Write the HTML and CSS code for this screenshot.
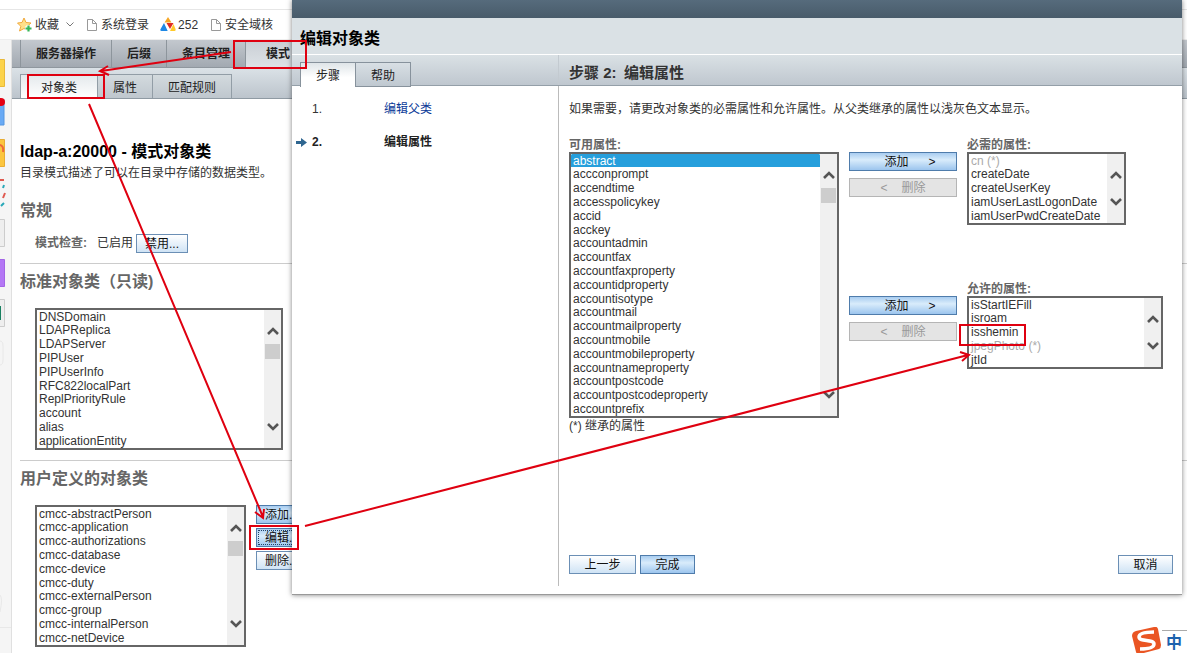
FILE: index.html
```html
<!DOCTYPE html>
<html lang="zh-CN">
<head>
<meta charset="utf-8">
<title>编辑对象类</title>
<link rel="stylesheet" href="styles.css">
</head>
<body>
<svg class="defs" aria-hidden="true">
  <symbol id="up" viewBox="0 0 12 8"><path d="M1 7 6 2l5 5" fill="none" stroke="#555" stroke-width="2.6"/></symbol>
  <symbol id="down" viewBox="0 0 12 8"><path d="M1 1l5 5 5-5" fill="none" stroke="#555" stroke-width="2.6"/></symbol>
  <symbol id="file" viewBox="0 0 12 14"><path d="M1.500 1.500h5l4 4v7h-9zM6.500 1.500v4h4" fill="#fff" stroke="#999"/></symbol>
</svg>

<div class="chrome"></div>
<nav class="bookmarks">
  <a class="fav" href="#"><svg width="16" height="16" viewBox="0 0 16 16"><path d="M7 1l2 4.500 5 .5-3.800 3.300L11.500 14 7 11.500 2.500 14l1.300-4.700L.5 6l4.500-.5z" fill="#ffe08a" stroke="#f0a93c"/><path d="M11.500 8v7M8 11.500h7" stroke="#fff" stroke-width="4"/><path d="M11.500 8.500v6M8.500 11.500h6" stroke="#35b558" stroke-width="2.200"/></svg>收藏<svg class="caret" width="8" height="5" viewBox="0 0 8 5"><path d="M.5.5 4 4 7.500.5" fill="none" stroke="#777"/></svg></a>
  <a class="login" href="#"><svg width="12" height="14"><use href="#file"/></svg>系统登录</a>
  <a class="num" href="#"><svg width="16" height="15" viewBox="0 0 16 15"><path d="M8 0l3.500 5.500H4.500z" fill="#f6a623"/><path d="M4 6l3.700 8H1.500C.3 14 0 13 .6 12z" fill="#1e88e5"/><path d="M6.500 6h7L10 12z" fill="#e02b20"/><path d="M13.500 7l2 5c.4 1 0 2-1 2H10z" fill="#ffc928"/></svg>252</a>
  <a href="#"><svg width="12" height="14"><use href="#file"/></svg>安全域核</a>
</nav>

<div class="workspace">
  <aside class="rail"><svg width="11" height="600" viewBox="0 40 11 600">
    <path d="M-5 59.500h9.500v27H-5z" fill="#fcd34b" stroke="#e9b93a"/>
    <path d="M-5 99.500h9V125H-5z" fill="#69aaf5" stroke="#5596e0"/><circle cx="1" cy="102" r="4" fill="#e60012"/>
    <path d="M-5 139.500h9.500v27H-5z" fill="#fcc63f" stroke="#e8ad35"/><path d="M-1 145q5 0 4 7" fill="none" stroke="#ef6a3a" stroke-width="2"/>
    <path d="M3 188l1-3M1 206l3-3" stroke="#29a8b8" stroke-width="2"/><path d="M0 180h4M3 198l2-5" stroke="#e05a50" stroke-width="2"/>
    <path d="M-5 219.500h9.500v27H-5z" fill="#eee" stroke="#ccc"/>
    <path d="M-5 259.500h9.500v27H-5z" fill="#b477f5" stroke="#a366e6"/>
    <path d="M-5 299.500h9.500v27H-5z" fill="#eee" stroke="#ccc"/><path d="M0 306h1v14H0z" fill="#188060"/>
    <path d="M0 341q3 0 3 5v14q0 5-3 5M0 595q3 3 0 17M0 627.500h11" fill="none" stroke="#e8e8e8"/>
  </svg></aside>
  <main class="page">
    <nav class="tabs">
      <a href="#">服务器操作</a><a href="#">后缀</a><a href="#">条目管理</a><a class="on" href="#">模式</a>
    </nav>
    <nav class="subtabs">
      <a class="on" href="#">对象类</a><a href="#">属性</a><a href="#">匹配规则</a>
    </nav>
    <div class="content">
      <h1>ldap-a:20000 - 模式对象类</h1>
      <p class="intro">目录模式描述了可以在目录中存储的数据类型。</p>
      <section class="general">
        <h2>常规</h2>
        <div class="check"><span class="name">模式检查:</span><span>已启用</span><button class="btn">禁用...</button></div>
      </section>
      <section>
        <h2><label for="std">标准对象类（只读)</label></h2>
        <div class="listbox tall std">
          <select id="std" size="10">
            <option>DNSDomain</option><option>LDAPReplica</option><option>LDAPServer</option><option>PIPUser</option><option>PIPUserInfo</option><option>RFC822localPart</option><option>ReplPriorityRule</option><option>account</option><option>alias</option><option>applicationEntity</option>
          </select>
          <div class="bar"><svg class="arrow"><use href="#up"/></svg><i class="thumb"></i><svg class="arrow last"><use href="#down"/></svg></div>
        </div>
      </section>
      <section>
        <h2><label for="usr">用户定义的对象类</label></h2>
        <div class="with-actions">
          <div class="listbox tall usr">
            <select id="usr" size="10">
              <option>cmcc-abstractPerson</option><option>cmcc-application</option><option>cmcc-authorizations</option><option>cmcc-database</option><option>cmcc-device</option><option>cmcc-duty</option><option>cmcc-externalPerson</option><option>cmcc-group</option><option>cmcc-internalPerson</option><option>cmcc-netDevice</option>
            </select>
            <div class="bar"><svg class="arrow"><use href="#up"/></svg><i class="thumb"></i><svg class="arrow last"><use href="#down"/></svg></div>
          </div>
          <div class="actions"><button class="btn primary">添加...</button><button class="btn primary focus">编辑...</button><button class="btn">删除...</button></div>
        </div>
      </section>
    </div>
  </main>
</div>

<div class="dialog" role="dialog" aria-labelledby="dlg-title">
  <div class="titlebar"></div>
  <h2 class="dlg-title" id="dlg-title">编辑对象类</h2>
  <div class="dlg-bar">
    <nav class="dlg-tabs"><a class="on" href="#">步骤</a><a href="#">帮助</a></nav>
    <h3>步骤 2:&ensp;编辑属性</h3>
  </div>
  <div class="dlg-body">
    <div class="steps">
      <div class="step"><span></span><span>1.</span><a href="#">编辑父类</a></div>
      <div class="step current"><svg width="11" height="9" viewBox="0 0 11 9"><path d="M0 3h5V0l6 4.500L5 9V6H0z" fill="#2f6690"/></svg><span>2.</span><span>编辑属性</span></div>
    </div>
    <div class="editor">
      <p>如果需要，请更改对象类的必需属性和允许属性。从父类继承的属性以浅灰色文本显示。</p>
      <div class="picker">
        <div class="available">
          <label for="avail">可用属性:</label>
          <div class="listbox avail">
            <select id="avail" size="19">
              <option selected>abstract</option><option>accconprompt</option><option>accendtime</option><option>accesspolicykey</option><option>accid</option><option>acckey</option><option>accountadmin</option><option>accountfax</option><option>accountfaxproperty</option><option>accountidproperty</option><option>accountisotype</option><option>accountmail</option><option>accountmailproperty</option><option>accountmobile</option><option>accountmobileproperty</option><option>accountnameproperty</option><option>accountpostcode</option><option>accountpostcodeproperty</option><option>accountprefix</option>
            </select>
            <div class="bar"><svg class="arrow"><use href="#up"/></svg><i class="thumb"></i><svg class="arrow last"><use href="#down"/></svg></div>
          </div>
          <div class="note">(*) 继承的属性</div>
        </div>
        <div class="targets">
          <div class="target">
            <div class="moves"><button class="btn add"><span>添加</span><span>&gt;</span></button><button class="btn remove" disabled><span>&lt;</span><span>删除</span></button></div>
            <div>
              <label for="req">必需的属性:</label>
              <div class="listbox short req">
                <select id="req" size="5"><option disabled>cn (*)</option><option>createDate</option><option>createUserKey</option><option>iamUserLastLogonDate</option><option>iamUserPwdCreateDate</option></select>
                <div class="bar"><svg class="arrow"><use href="#up"/></svg><svg class="arrow last"><use href="#down"/></svg></div>
              </div>
            </div>
          </div>
          <div class="target">
            <div class="moves"><button class="btn add"><span>添加</span><span>&gt;</span></button><button class="btn remove" disabled><span>&lt;</span><span>删除</span></button></div>
            <div>
              <label for="opt">允许的属性:</label>
              <div class="listbox short opt">
                <select id="opt" size="5"><option>isStartIEFill</option><option>isroam</option><option>isshemin</option><option disabled>jpegPhoto (*)</option><option>jtId</option></select>
                <div class="bar"><svg class="arrow"><use href="#up"/></svg><svg class="arrow last"><use href="#down"/></svg></div>
              </div>
            </div>
          </div>
        </div>
      </div>
      <div class="footer"><button class="btn back">上一步</button><button class="btn primary done">完成</button><button class="btn cancel">取消</button></div>
    </div>
  </div>
</div>

<svg class="marks" width="1187" height="653" viewBox="0 0 1187 653" fill="none" stroke="#df0010" stroke-width="2" aria-hidden="true">
  <path d="M234 41h72v27h-72zM28 75h76v23H28zM250 526h48v23h-48zM960 325h65v20h-65z"/>
  <path d="M231 52 101 71M108 66l-8 5 9 4" />
  <path d="M89 104 263 517M255 512l8 6 1-9"/>
  <path d="M305 526 968 355M960 352l9 3-7 6"/>
</svg>

<div class="ime">
  <svg width="30" height="28" viewBox="0 0 30 28"><path d="M4 4 22 0q3-1 4 2l3 16q0 3-2 4L8 27q-3 1-4-2L0 9q0-4 4-5z" fill="#ea5523"/><path d="M22 5Q7 5 7 10c0 5 15 2 15 7 0 4-8 5-14 5" fill="none" stroke="#fff" stroke-width="3.500"/></svg>
  <span>中</span>
</div>
</body>
</html>
```

FILE: styles.css
```css
* { box-sizing: border-box; }

body {
  margin: 0;
  min-height: 100vh;
  display: flex;
  flex-direction: column;
  overflow: hidden;
  position: relative;
  background: #fff;
  color: #333;
  font: 12px/20px "Liberation Sans", "Noto Sans CJK SC", sans-serif;
}

h1, h2, h3, p { margin: 0; }
a { color: inherit; text-decoration: none; }
svg { flex: none; }
.defs { position: absolute; width: 0; height: 0; }

.chrome { height: 10px; border-bottom: 1px solid #e6e6e6; }

.bookmarks {
  display: flex;
  align-items: center;
  height: 30px;
  padding-left: 17px;
  border-bottom: 1px solid #eee;
}
.bookmarks a { display: flex; align-items: center; gap: 3px; margin-right: 11px; }
.bookmarks .fav { gap: 2px; margin-right: 12px; }
.bookmarks .num { gap: 2px; margin-right: 12px; }
.caret { margin-left: 5px; }

.workspace { flex: 1; display: flex; }
.rail { width: 12px; flex: none; background: #f5f5f5; border-right: 1px solid #e0e0e0; }
.page { flex: 1; min-width: 0; }

.tabs {
  display: flex;
  height: 28px;
  padding-left: 8px;
  border-bottom: 1px solid #8f979e;
  background: linear-gradient(#c3c8ce, #a2a9b1);
  color: #222;
  font-weight: bold;
  line-height: 29px;
}
.tabs a { height: 27px; padding: 0 15px; border-left: 1px solid #8d959c; }
.tabs .on { padding: 0 20px; background: linear-gradient(#c9ced4, #dde2e6); }

.subtabs {
  display: flex;
  height: 31px;
  padding: 6px 0 0 8px;
  border-bottom: 1px solid #8f9aa3;
  background: linear-gradient(#dbe2e7, #bcc4cc);
  line-height: 26px;
  color: #222;
}
.subtabs a {
  height: 24px;
  padding: 0 15px;
  border: 1px solid #929da6;
  border-width: 1px 1px 0 0;
  background: linear-gradient(#d3dade, #bfc7ce);
}
.subtabs .on { padding: 0 20px; border-left-width: 1px; background: linear-gradient(#e4e9ec, #fff); }

.content { padding: 43px 0 0 8px; }
h1 { font-size: 16px; line-height: 20px; color: #000; }
.intro { margin-top: 1px; }
.content h2 { font-size: 16px; line-height: 26px; color: #666; }
.content section { padding-top: 5px; }
.content section + section { border-top: 1px solid #ccc; margin-top: 10px; }
.content .general { padding-top: 15px; }
.check { display: flex; align-items: center; margin-top: 10px; padding-left: 15px; line-height: 19px; }
.check .name { width: 62px; font-weight: bold; color: #666; }
.check .btn { width: 52px; margin-left: 3px; }

.btn {
  height: 19px;
  padding: 2px 0 0;
  border: 1px solid #6b8fb5;
  background: linear-gradient(#fff, #cfe3f5);
  color: #111;
  font: inherit;
  line-height: 15px;
}
.btn.primary, .btn.add { border-color: #4f7cab; background: linear-gradient(#a9cdf0, #d9ecfb 40%, #9cc5ee); }
.btn.remove { border-color: #b5b5b5; background: #e4e4e4; color: #999; }

.listbox { display: flex; border: 2px solid #666; background: #fff; }
.listbox select {
  flex: 1;
  min-width: 0;
  height: 100%;
  border: 0;
  padding: 0;
  outline: 0;
  overflow: hidden;
  background: #fff;
  font: 12px/14px "Liberation Sans", "Noto Sans CJK SC", sans-serif;
  color: #333;
}
option { min-height: 0; padding: 0 2px; line-height: 14px; height: 14px; overflow: visible; }
option:nth-child(5n+1) { line-height: 12px; height: 13px; }
option:disabled { color: #aaa; }
option:checked { background: #269fdc linear-gradient(#269fdc, #269fdc); color: #fff; -webkit-text-fill-color: #fff; }

.bar { width: 17px; background: #f0f0f0; display: flex; flex-direction: column; align-items: center; padding: 17px 0; }
.arrow { width: 12px; height: 8px; }
.arrow.last { margin-top: auto; }
.thumb { width: 15px; height: 15px; margin-top: 9px; background: #cdcdcd; }

.listbox.tall { height: 142px; margin: 13px 0 0 15px; }
.listbox.avail { height: 266px; }
.listbox.short { height: 73px; }
.std { width: 248px; }
.usr { width: 211px; }
.avail { width: 270px; }
.req { width: 159px; }
.opt { width: 196px; }

.with-actions { display: flex; gap: 10px; }
.actions { display: flex; flex-direction: column; gap: 4px; padding-top: 13px; }
.actions .btn { width: 52px; }
.actions .focus { outline: 1px dotted #246; outline-offset: -3px; }

.dialog {
  position: absolute;
  top: 0;
  left: 292px;
  right: 5px;
  height: 595px;
  display: flex;
  flex-direction: column;
  background: #fff;
  border-bottom: 1px solid #999;
  box-shadow: 0 0 5px rgba(0, 0, 0, .5);
}
.titlebar { height: 18px; background: linear-gradient(#566b7c, #485b6a); }
.dlg-title {
  height: 37px;
  padding: 9px 8px 0;
  border-bottom: 1px solid #fff;
  background: #dae1e5;
  color: #000;
  font-size: 16px;
  line-height: 24px;
}
.dlg-bar {
  display: flex;
  height: 31px;
  border-bottom: 1px solid #949fa8;
  background: linear-gradient(#dae1e5, #bfc7cf);
}
.dlg-tabs { display: flex; width: 267px; padding: 7px 0 0 8px; border-right: 1px solid #c3cad0; color: #222; line-height: 26px; }
.dlg-tabs a { height: 25px; padding: 0 15px; border: 1px solid #87929c; border-left: 0; background: linear-gradient(#d8dfe4, #bfc8d0); }
.dlg-tabs .on { border-left: 1px solid #87929c; border-bottom: 0; background: linear-gradient(#dfe5e8, #fff 60%); }
.dlg-bar h3 { padding-left: 10px; font-size: 15px; line-height: 36px; color: #333; }

.dlg-body { flex: 1; display: flex; }
.steps { width: 267px; margin-bottom: 8px; padding: 13px 0 0 4px; border-right: 1px solid #bbb; }
.step { display: grid; grid-template-columns: 16px 72px 1fr; align-items: center; margin-bottom: 13px; }
.step a { color: #0b3a98; }
.current { color: #222; font-weight: bold; }

.editor { flex: 1; min-width: 0; display: flex; flex-direction: column; padding: 13px 9px 20px 10px; }
.picker { display: flex; gap: 10px; margin-top: 17px; }
.picker label { display: block; height: 16px; line-height: 18px; font-weight: bold; color: #666; }
.note { line-height: 16px; }
.targets { display: flex; flex-direction: column; gap: 55px; }
.target { display: flex; gap: 10px; }
.moves { display: flex; flex-direction: column; gap: 7px; padding-top: 16px; }
.moves .btn { display: flex; justify-content: center; align-items: center; width: 108px; }
.add { gap: 20px; }
.remove { gap: 14px; }
.moves .add { padding-left: 14px; }
.footer { display: flex; gap: 4px; margin-top: auto; }
.back { width: 67px; }
.done, .cancel { width: 55px; }
.cancel { margin-left: auto; }

.marks { position: absolute; top: 0; left: 0; pointer-events: none; }

.ime { position: absolute; right: 0; bottom: -2px; display: flex; width: 55px; height: 28px; }
.ime span {
  flex: 1;
  margin-top: 3px;
  padding-left: 4px;
  border-top: 1px solid #aaa;
  color: #1c62ae;
  font-size: 16px;
  font-weight: bold;
  line-height: 24px;
}
```
